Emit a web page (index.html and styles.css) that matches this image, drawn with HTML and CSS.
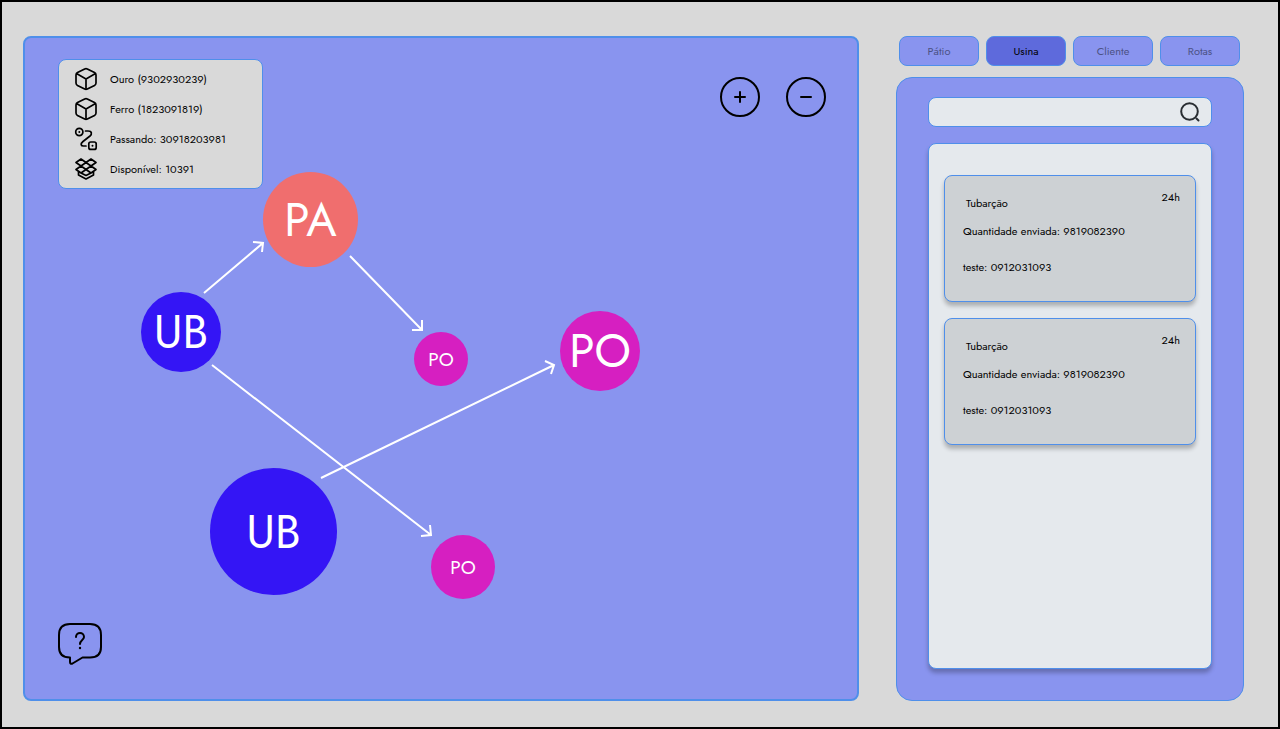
FILE: index.html
```html
<!DOCTYPE html>
<html lang="pt-BR">
<head>
<meta charset="utf-8">
<meta name="viewport" content="width=device-width, initial-scale=1">
<title>Usina</title>
<link rel="stylesheet" href="styles.css">
</head>
<body>
<svg class="symbols" aria-hidden="true">
  <symbol id="box" viewBox="0 0 24 24">
    <path d="M13.300 2 L20.500 5.600 Q22 6.400 22 8 V16 Q22 17.600 20.500 18.400 L13.300 22 Q12 22.600 10.700 22 L3.500 18.400 Q2 17.600 2 16 V8 Q2 6.400 3.500 5.600 L10.700 2 Q12 1.400 13.300 2 Z M2.500 6.600 L12 12 L21.500 6.600 M12 12 V22"/>
  </symbol>
  <symbol id="route" viewBox="0 0 24 24">
    <circle cx="5.300" cy="5" r="3.600"/>
    <rect x="14.800" y="15" width="7.400" height="7.400" rx="2"/>
    <path d="M11.500 4 H14 C18 4 18.200 7 16 9 L9 14.500 C6 17 7 19 9.500 19 H12"/>
    <circle class="dot" cx="5.300" cy="5" r="1"/>
    <circle class="dot" cx="18.500" cy="18.700" r="1"/>
  </symbol>
  <symbol id="stock" viewBox="0 0 24 24">
    <path d="M7 2 L12 5.500 L7 9 L2 5.500 Z M17 2 L22 5.500 L17 9 L12 5.500 Z M7 9 L12 12.500 L7 16 L2 12.500 Z M17 9 L22 12.500 L17 16 L12 12.500 Z M4.500 14.500 V18 L12 22 L19.500 18 V14.500 M7 16 L12 18.500 L17 16"/>
  </symbol>
</svg>

<div class="layout">
  <main class="map" aria-label="Mapa de fluxo">
    <svg class="edges" aria-hidden="true">
      <path d="M179 255 L238 205 M228 204 L238 205 L237 214"/>
      <path d="M325 218 L397 292 M387 292 H397 V282"/>
      <path d="M187 327 L406 497 M396 498 L406 497 L405 487"/>
      <path d="M296 440 L529 327 M520 323 L529 327 L526 336"/>
    </svg>
    <div class="node node-pa">PA</div>
    <div class="node node-ub">UB</div>
    <div class="node small node-po-a">PO</div>
    <div class="node node-po-b">PO</div>
    <div class="node node-ub-large">UB</div>
    <div class="node small node-po-c">PO</div>

    <ul class="legend">
      <li><svg class="icon" aria-hidden="true"><use href="#box"/></svg>Ouro (9302930239)</li>
      <li><svg class="icon" aria-hidden="true"><use href="#box"/></svg>Ferro (1823091819)</li>
      <li><svg class="icon" aria-hidden="true"><use href="#route"/></svg>Passando: 30918203981</li>
      <li><svg class="icon" aria-hidden="true"><use href="#stock"/></svg>Disponível: 10391</li>
    </ul>

    <div class="zoom">
      <button type="button" aria-label="Aumentar zoom"><svg viewBox="0 0 16 16" aria-hidden="true"><path d="M3 8 H13 M8 3 V13"/></svg></button>
      <button type="button" aria-label="Diminuir zoom"><svg viewBox="0 0 16 16" aria-hidden="true"><path d="M3 8 H13"/></svg></button>
    </div>

    <button type="button" class="help" aria-label="Ajuda">
      <svg viewBox="0 0 44 42" aria-hidden="true">
        <path d="M12 1 H32 Q43 1 43 12 V24 Q43 34.500 32 34.500 H24.500 L14.500 40.500 Q12 41.500 12 39 V34.500 Q1 34.500 1 24 V12 Q1 1 12 1 Z"/>
        <path d="M18 14 C18 8.500 26 8.500 26 14 C26 17 22 17 22 21"/>
        <circle class="dot" cx="22" cy="25" r="1.200"/>
      </svg>
    </button>
  </main>

  <aside class="side">
    <nav class="tabs" aria-label="Seções">
      <button type="button">Pátio</button>
      <button type="button" class="active" aria-current="page">Usina</button>
      <button type="button">Cliente</button>
      <button type="button">Rotas</button>
    </nav>
    <section class="panel">
      <form class="search" role="search">
        <input type="search" aria-label="Buscar">
        <button type="submit" aria-label="Buscar"><svg viewBox="0 0 20 20" aria-hidden="true"><circle cx="9.500" cy="9.500" r="8.300"/><path d="M16.500 16.500 L18.500 18.500"/></svg></button>
      </form>
      <div class="list">
        <article class="card">
          <header><h2>Tubarção</h2><span>24h</span></header>
          <p>Quantidade enviada: 9819082390</p>
          <p>teste: 0912031093</p>
        </article>
        <article class="card">
          <header><h2>Tubarção</h2><span>24h</span></header>
          <p>Quantidade enviada: 9819082390</p>
          <p>teste: 0912031093</p>
        </article>
      </div>
    </section>
  </aside>
</div>
</body>
</html>
```

FILE: styles.css
```css
* { box-sizing: border-box; }

body {
  margin: 0;
  font: 11px/16px Futura, Jost, Lato, sans-serif;
  color: #000;
}

button, input { font: inherit; color: inherit; }
button { padding: 0; cursor: pointer; }
h2, p, ul { margin: 0; padding: 0; }

svg { fill: none; stroke: #000; stroke-width: 2; stroke-linecap: round; stroke-linejoin: round; }
.dot { fill: #000; stroke: none; }
.symbols { position: absolute; width: 0; height: 0; }

.layout {
  display: flex;
  gap: 37px;
  min-height: 100vh;
  padding: 34px 34px 26px 21px;
  border: 2px solid #000;
  background: #d9d9d9;
}

.map {
  position: relative;
  flex: 1;
  min-width: 0;
  overflow: hidden;
  background: #8994ef;
  border: 2px solid #4f8fea;
  border-radius: 8px;
}

.edges { position: absolute; inset: 0; width: 100%; height: 100%; stroke: #fff; stroke-linecap: butt; stroke-linejoin: miter; }

.node {
  position: absolute;
  display: flex;
  align-items: center;
  justify-content: center;
  border-radius: 50%;
  color: #fff;
  font-size: 46px;
  line-height: 1;
}
.node.small { font-size: 19px; }
.node-pa { left: 238px; top: 134px; width: 95px; height: 95px; background: #f06e6e; }
.node-ub { left: 116px; top: 254px; width: 80px; height: 80px; background: #3415f5; }
.node-po-a { left: 389px; top: 294px; width: 54px; height: 54px; background: #d61fc1; }
.node-po-b { left: 535px; top: 273px; width: 80px; height: 80px; background: #d61fc1; }
.node-ub-large { left: 185px; top: 430px; width: 127px; height: 127px; background: #3415f5; }
.node-po-c { left: 406px; top: 497px; width: 64px; height: 64px; background: #d61fc1; }

.legend {
  position: absolute;
  left: 33px;
  top: 21px;
  width: 205px;
  padding: 4px 15px;
  list-style: none;
  background: #d9d9d9;
  border: 1px solid #4f8fea;
  border-radius: 8px;
}
.legend li { display: flex; align-items: center; gap: 12px; height: 30px; white-space: nowrap; }
.icon { flex: none; width: 24px; height: 24px; stroke-width: 1.7; }

.zoom { position: absolute; top: 39px; right: 31px; display: flex; gap: 26px; }
.zoom button {
  display: grid;
  place-items: center;
  width: 40px;
  height: 40px;
  background: none;
  border: 2px solid #000;
  border-radius: 50%;
}
.zoom svg { width: 16px; height: 16px; }

.help { position: absolute; left: 33px; bottom: 34px; background: none; border: 0; }
.help svg { display: block; width: 44px; height: 42px; }

.side { display: flex; flex-direction: column; gap: 11px; width: 348px; flex: none; }

.tabs { display: flex; gap: 7px; padding: 0 4px 0 3px; }
.tabs button {
  flex: 1;
  height: 30px;
  background: #8994ef;
  border: 1px solid #4f8fea;
  border-radius: 8px;
  color: #4c5285;
}
.tabs .active { background: #5e6adc; color: #000; }

.panel {
  flex: 1;
  display: flex;
  flex-direction: column;
  gap: 16px;
  padding: 19px 31px 31px;
  background: #8994ef;
  border: 1px solid #4f8fea;
  border-radius: 16px;
}

.search {
  display: flex;
  align-items: center;
  height: 30px;
  padding: 0 11px;
  background: #e5e9ed;
  border: 1px solid #4f8fea;
  border-radius: 8px;
}
.search input { flex: 1; min-width: 0; background: none; border: 0; outline: 0; }
.search button { background: none; border: 0; }
.search svg { display: block; width: 20px; height: 20px; stroke: #292d32; }

.list {
  flex: 1;
  display: flex;
  flex-direction: column;
  gap: 16px;
  padding: 31px 15px;
  background: #e5e9ed;
  border: 1px solid #4f8fea;
  border-radius: 8px;
  box-shadow: 0 4px 4px rgba(0, 0, 0, 0.25);
}

.card {
  padding: 13px 15px 26px 18px;
  background: #cdd1d4;
  border: 1px solid #4f8fea;
  border-radius: 8px;
  box-shadow: 0 4px 4px rgba(0, 0, 0, 0.25);
}
.card header { display: flex; justify-content: space-between; margin-bottom: 12px; }
.card h2 { padding: 6px 0 0 3px; font-size: 11px; font-weight: 400; }
.card p + p { margin-top: 20px; }
```
